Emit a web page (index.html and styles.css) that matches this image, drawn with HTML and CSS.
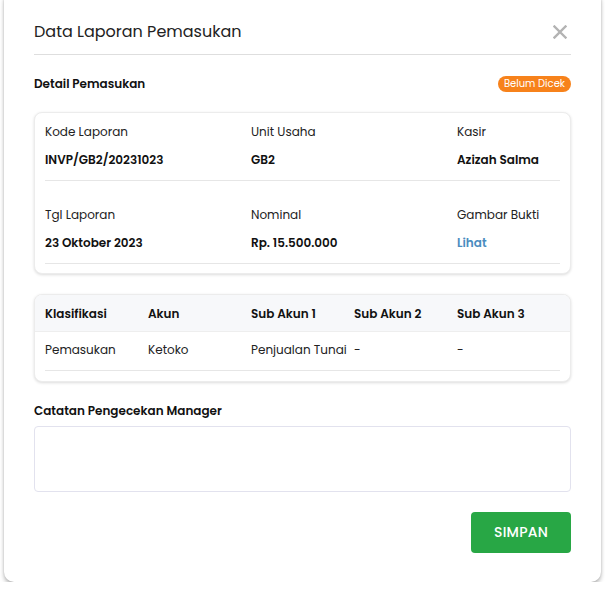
FILE: index.html
```html
<!DOCTYPE html>
<html lang="id">
<head>
<meta charset="utf-8">
<title>Data Laporan Pemasukan</title>
<link rel="stylesheet" href="styles.css">
</head>
<body>
<div class="modal">
  <div class="modal-header">
    <h2 class="modal-title">Data Laporan Pemasukan</h2>
    <button class="close" type="button" aria-label="Tutup">
      <svg width="14" height="14" viewBox="0 0 14 14"><path d="M1.5 1.5L12.5 12.5M12.5 1.5L1.5 12.5" stroke="#b3b3b3" stroke-width="2.4" stroke-linecap="square"/></svg>
    </button>
  </div>

  <div class="section-head">
    <h3 class="section-title">Detail Pemasukan</h3>
    <span class="badge">Belum Dicek</span>
  </div>

  <div class="card info">
    <div class="info-row">
      <div class="field"><div class="label">Kode Laporan</div><div class="value">INVP/GB2/20231023</div></div>
      <div class="field"><div class="label">Unit Usaha</div><div class="value">GB2</div></div>
      <div class="field"><div class="label">Kasir</div><div class="value">Azizah Salma</div></div>
    </div>
    <div class="info-row second">
      <div class="field"><div class="label">Tgl Laporan</div><div class="value">23 Oktober 2023</div></div>
      <div class="field"><div class="label">Nominal</div><div class="value">Rp. 15.500.000</div></div>
      <div class="field"><div class="label">Gambar Bukti</div><div class="value link">Lihat</div></div>
    </div>
  </div>

  <div class="card grid-table">
    <div class="thead">
      <div>Klasifikasi</div><div>Akun</div><div>Sub Akun 1</div><div>Sub Akun 2</div><div>Sub Akun 3</div>
    </div>
    <div class="trow">
      <div>Pemasukan</div><div>Ketoko</div><div>Penjualan Tunai</div><div>-</div><div>-</div>
    </div>
  </div>

  <label class="note-label" for="catatan">Catatan Pengecekan Manager</label>
  <textarea id="catatan" class="note"></textarea>

  <div class="actions">
    <button class="btn-save" type="button">SIMPAN</button>
  </div>
</div>
</body>
</html>
```

FILE: styles.css
```css
* { box-sizing: border-box; }
html, body { margin: 0; padding: 0; background: #fff; }
body {
  font-family: "Poppins", "Open Sans", "DejaVu Sans", sans-serif;
  color: #1d1d1d;
  padding: 0 4px;
}
.modal {
  margin-top: -10px;
  width: 597px;
  height: 592px;
  background: #fff;
  border-radius: 10px;
  box-shadow: 0 3px 4px rgba(0,0,0,0.28), 0 0 2px rgba(0,0,0,0.12);
  padding: 30px 30px 0;
}
.modal-header {
  display: flex;
  justify-content: space-between;
  align-items: center;
  padding-bottom: 10px;
  border-bottom: 1px solid #dedede;
}
.modal-title {
  margin: 0;
  font-size: 16px;
  line-height: 24px;
  font-weight: 400;
  color: #222;
}
.close {
  border: 0;
  background: none;
  padding: 0;
  margin-right: 4px;
  width: 14px;
  height: 14px;
  display: flex;
}
.section-head {
  margin-top: 21px;
  height: 16px;
  display: flex;
  justify-content: space-between;
  align-items: center;
}
.section-title {
  margin: 0;
  font-size: 12px;
  font-weight: 600;
  color: #111;
}
.badge {
  background: #f7821b;
  color: #fff;
  font-size: 10px;
  line-height: 16px;
  height: 16px;
  padding: 0 6px;
  border-radius: 8px;
}
.card {
  border: 1px solid #ececec;
  border-radius: 8px;
  box-shadow: 0 1px 3px rgba(0,0,0,0.14);
  background: #fff;
  overflow: hidden;
}
.info {
  margin-top: 20px;
  padding: 0 10px 9px;
}
.info-row {
  display: grid;
  grid-template-columns: 206px 206px 1fr;
  padding: 10px 0 11px;
  border-bottom: 1px solid #e6e6e6;
}
.info-row.second { padding-top: 25px; }
.label {
  font-size: 12px;
  line-height: 18px;
  color: #222;
}
.value {
  margin-top: 10px;
  font-size: 12px;
  line-height: 18px;
  font-weight: 600;
  color: #111;
}
.value.link { color: #4a8cbf; }
.grid-table { margin-top: 20px; padding-bottom: 10px; }
.thead, .trow {
  display: grid;
  grid-template-columns: repeat(5, 1fr);
  font-size: 12px;
}
.thead {
  background: #f7f8fa;
  padding: 1px 10px 0;
  height: 37px;
  align-items: center;
  font-weight: 600;
  color: #111;
  border-bottom: 1px solid #eeeeee;
}
.trow {
  margin: 0 10px;
  height: 39px;
  padding-bottom: 2px;
  align-items: center;
  border-bottom: 1px solid #e6e6e6;
  color: #222;
  white-space: nowrap;
}
.note-label {
  display: block;
  margin-top: 20px;
  font-size: 12px;
  line-height: 18px;
  font-weight: 600;
  color: #111;
}
.note {
  display: block;
  margin-top: 6px;
  width: 100%;
  height: 66px;
  border: 1px solid #e2e2ee;
  border-radius: 4px;
  resize: none;
  font-family: inherit;
}
.actions {
  display: flex;
  justify-content: flex-end;
  margin-top: 20px;
}
.btn-save {
  width: 100px;
  height: 41px;
  border: 0;
  border-radius: 4px;
  background: #28a745;
  color: #fff;
  font-family: inherit;
  font-size: 14px;
  font-weight: 500;
  letter-spacing: 0.2px;
}
```
